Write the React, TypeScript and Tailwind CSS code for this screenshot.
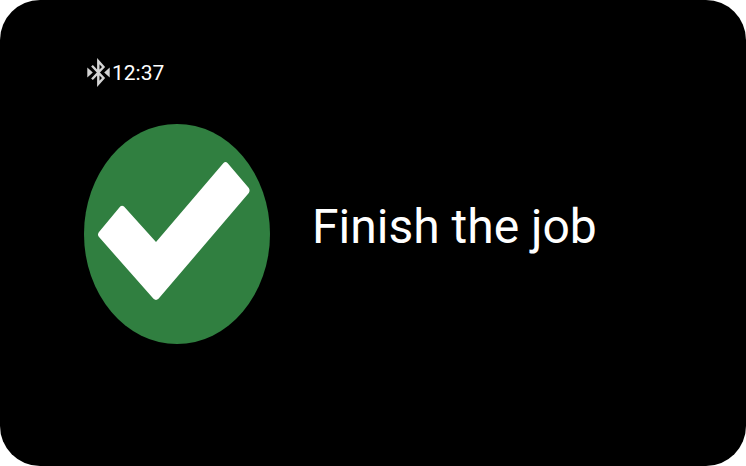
function BluetoothIcon() {
  return (
    <svg viewBox="0 0 24 30" className="h-[30px] w-6 shrink-0" role="img" aria-label="Bluetooth connected">
      <path
        d="M5 7.8 L16.5 20 L11.3 25.8 V3.2 L16.5 9 L5 21.2"
        fill="none"
        stroke="#d4d4d4"
        strokeWidth="2.4"
        strokeLinejoin="miter"
      />
      <path d="M0.3 9.5 L5.8 14.5 L0.3 19.5 Z M22.7 9.5 L17.2 14.5 L22.7 19.5 Z" fill="#d4d4d4" />
    </svg>
  );
}

function SuccessIcon() {
  return (
    <svg viewBox="0 0 186 220" className="h-[220px] w-[186px] shrink-0" role="img" aria-label="Done">
      <ellipse cx="93" cy="110" rx="93" ry="110" fill="#307f40" />
      <path
        d="M36.2 82.6 Q38 80.8 40 82.6 L72 118 L139.5 39 Q141.5 36.8 143.5 39 L164.8 64 Q166.3 66.5 164.8 69 L74.5 174.8 Q72 177 69.5 174.8 L14.8 112.8 Q13.2 110.5 14.8 108.2 Z"
        fill="#ffffff"
      />
    </svg>
  );
}

export default function App() {
  return (
    <div className="min-h-screen bg-white">
      <main className="flex min-h-screen flex-col gap-9 rounded-[40px] bg-black px-[84px] pt-[58px] pb-10 font-['Roboto',sans-serif] text-white">
        <header className="flex items-center gap-px pl-[3px]">
          <BluetoothIcon />
          <time className="text-[21px] leading-7">12:37</time>
        </header>
        <section className="flex items-center gap-[42px]">
          <SuccessIcon />
          <h1 className="pb-3.5 text-5xl leading-14 font-normal">Finish the job</h1>
        </section>
      </main>
    </div>
  );
}
